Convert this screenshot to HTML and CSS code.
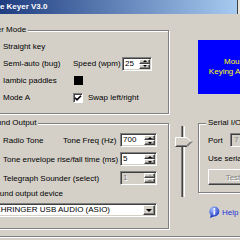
FILE: index.html
```html
<!DOCTYPE html>
<html>
<head>
<meta charset="utf-8">
<title>Mouse Keyer V3.0</title>
<link rel="stylesheet" href="styles.css">
</head>
<body>
<div class="window">
  <div class="titlebar">
    <span class="title">Mouse Keyer V3.0</span>
    <span class="capbtn"></span>
  </div>
  <div class="client">
    <div class="col-left">
      <div class="group g-mode">
        <span class="legend lg-mode">Keyer Mode</span>
        <div class="mrow">
          <div class="opt"><span class="radio"></span>Straight key</div>
        </div>
        <div class="mrow">
          <div class="opt"><span class="radio"></span>Semi-auto (bug)</div>
          <div class="lbl">Speed (wpm)</div>
          <div class="spin s25"><span class="v">25</span><span class="ud"><span class="b up"></span><span class="b dn"></span></span></div>
        </div>
        <div class="mrow">
          <div class="opt"><span class="radio on"></span>Iambic paddles</div>
          <div class="lbl"><span class="swatch"></span></div>
        </div>
        <div class="mrow">
          <div class="opt"><span class="radio"></span>Mode A</div>
          <div class="opt span2"><span class="check"><svg width="8" height="8" viewBox="0 0 8 8"><polyline points="1,3.8 3,5.8 7,1.8" fill="none" stroke="#000" stroke-width="1.6"/></svg></span>Swap left/right</div>
        </div>
      </div>

      <div class="group g-sound">
        <span class="legend lg-sound">Sound Output</span>
        <div class="srow">
          <div class="opt"><span class="radio on"></span>Radio Tone</div>
          <div class="lbl">Tone Freq (Hz)</div>
          <div class="spin s700"><span class="v">700</span><span class="ud"><span class="b up"></span><span class="b dn"></span></span></div>
        </div>
        <div class="srow">
          <div class="opt span2"><span class="radio"></span>Tone envelope rise/fall time (ms)</div>
          <div class="spin s700"><span class="v">5</span><span class="ud"><span class="b up"></span><span class="b dn"></span></span></div>
        </div>
        <div class="srow">
          <div class="opt span2"><span class="radio"></span>Telegraph Sounder (select)</div>
          <div class="spin s700 off"><span class="v">1</span><span class="ud"><span class="b up"></span><span class="b dn"></span></span></div>
        </div>
        <div class="devlabel">Sound output device</div>
        <div class="combo"><span class="v">BEHRINGER USB AUDIO (ASIO)</span><span class="drop"></span></div>
      </div>
    </div>

    <div class="col-mid">
      <div class="slider">
        <svg class="thumb" width="18" height="10" viewBox="0 0 18 10">
          <polygon points="0,0 12,0 17,5 12,10 0,10" fill="#d4d0c8"/>
          <polyline points="0.5,9.5 0.5,0.5 12,0.5 16.3,4.8" fill="none" stroke="#fff"/>
          <polyline points="0.5,9.5 12,9.5 17,4.5" fill="none" stroke="#404040"/>
          <polyline points="1.5,8.5 11.6,8.5 15.6,4.8" fill="none" stroke="#808080"/>
        </svg>
      </div>
    </div>

    <div class="col-right">
      <div class="display">
        <span>Mouse</span>
        <span>Keying Adapter</span>
      </div>
      <div class="group g-serial">
        <span class="legend lg-serial">Serial I/O</span>
        <div class="prow"><span class="plabel">Port</span><span class="tbox">7</span></div>
        <div class="useser">Use serial port</div>
        <div class="btn">Test</div>
      </div>
      <div class="help">
        <svg width="12" height="12" viewBox="0 0 12 12">
          <defs>
            <radialGradient id="hg" cx="0.35" cy="0.3" r="0.8">
              <stop offset="0" stop-color="#a8c0ff"/>
              <stop offset="1" stop-color="#1a36c4"/>
            </radialGradient>
          </defs>
          <path d="M3 8.5 L2 12 L6.5 10 Z" fill="#1a36c4"/>
          <circle cx="6.3" cy="5.5" r="5" fill="url(#hg)"/>
          <circle cx="6.3" cy="2.9" r="1" fill="#fff"/>
          <rect x="5.4" y="4.5" width="1.8" height="4.2" fill="#fff"/>
        </svg>
        <span>Help</span>
      </div>
    </div>
  </div>
  <div class="sep"></div>
</div>
</body>
</html>
```

FILE: styles.css
```css
* { box-sizing: border-box; }
html, body { margin: 0; padding: 0; }
body {
  width: 240px;
  height: 240px;
  overflow: hidden;
  background: #d4d0c8;
  font-family: "Liberation Sans", Arial, sans-serif;
  font-size: 8px;
  color: #000;
}
.window { width: 240px; }

/* title bar */
.titlebar {
  height: 14px;
  display: flex;
  background: linear-gradient(to right, #1e3c80 0, #a6caf0 236px);
}
.title {
  flex: 1;
  margin-left: -21px;
  font-weight: bold;
  color: #fff;
  line-height: 14px;
  white-space: nowrap;
}
.capbtn {
  width: 3px;
  flex: none;
  border-left: 1px solid #404040;
  background: #e6e4de;
}

/* client area */
.client {
  height: 222px;
  display: flex;
  align-items: flex-start;
}
.col-left { width: 198px; margin-left: -29px; flex: none; }
.col-mid { width: 29px; flex: none; }
.col-right { width: 80px; flex: none; }

/* group boxes */
.group {
  position: relative;
  border: 1px solid #808080;
  box-shadow: inset 1px 1px 0 #fff, 1px 1px 0 #fff;
}
.legend {
  position: absolute;
  top: -6px;
  padding: 0 2px;
  line-height: 10px;
  background: #d4d0c8;
  white-space: nowrap;
}
.lg-mode { left: 9px; }
.lg-sound { left: 13px; }
.lg-serial { left: 7px; }

.g-mode {
  margin-top: 16px;
  height: 84px;
  padding: 7px 11px 7px 14px;
}
.mrow {
  display: grid;
  grid-template-columns: 87px 49px 30px;
  height: 17px;
  align-items: center;
}
.g-sound {
  margin-top: 9px;
  height: 106px;
  padding: 9px 11px 11px 14px;
}
.srow {
  display: grid;
  grid-template-columns: 77px 57px 37px;
  height: 14px;
  align-items: center;
}
.srow + .srow { margin-top: 5px; }
.span2 { grid-column: span 2; }

.opt {
  display: flex;
  align-items: center;
  white-space: nowrap;
}
.lbl { display: flex; align-items: center; white-space: nowrap; }

.radio {
  width: 12px;
  height: 12px;
  margin-right: 5px;
  flex: none;
  border-radius: 50%;
  background: #fff;
  border: 1px solid #808080;
  box-shadow: inset 1px 1px 0 #404040;
  display: flex;
  align-items: center;
  justify-content: center;
}
.radio.on::after {
  content: "";
  width: 4px;
  height: 4px;
  border-radius: 50%;
  background: #000;
}

.check {
  width: 10px;
  height: 10px;
  margin-right: 5px;
  flex: none;
  background: #fff;
  border-top: 1px solid #808080;
  border-left: 1px solid #808080;
  border-right: 1px solid #fff;
  border-bottom: 1px solid #fff;
  box-shadow: inset 1px 1px 0 #404040;
  display: flex;
  align-items: center;
  justify-content: center;
}
.check svg { display: block; }

.swatch {
  width: 9px;
  height: 9px;
  margin-left: 1px;
  background: #000;
}

/* sunken fields */
.spin, .combo, .tbox {
  border-top: 1px solid #808080;
  border-left: 1px solid #808080;
  border-right: 1px solid #fff;
  border-bottom: 1px solid #fff;
  box-shadow: inset 1px 1px 0 #404040, inset -1px -1px 0 #d4d0c8;
  background: #fff;
}
.spin {
  height: 14px;
  display: flex;
  padding: 1px;
}
.s25 { width: 30px; }
.s700 { width: 37px; }
.spin .v {
  flex: 1;
  padding-left: 1px;
  line-height: 10px;
  white-space: nowrap;
}
.ud {
  width: 11px;
  flex: none;
  display: flex;
  flex-direction: column;
  background: #d4d0c8;
}
.b {
  flex: 1;
  border: 1px solid;
  border-color: #fff #404040 #404040 #fff;
  box-shadow: inset -1px -1px 0 #808080;
  display: flex;
  align-items: center;
  justify-content: center;
}
.up::after {
  content: "";
  border-left: 2px solid transparent;
  border-right: 2px solid transparent;
  border-bottom: 2px solid #000;
}
.dn::after {
  content: "";
  border-left: 2px solid transparent;
  border-right: 2px solid transparent;
  border-top: 2px solid #000;
}
.spin.off { background: #d4d0c8; }
.spin.off .v { color: #808080; text-shadow: 1px 1px 0 #fff; }
.spin.off .up::after { border-bottom-color: #808080; }
.spin.off .dn::after { border-top-color: #808080; }

.devlabel {
  margin-top: 3px;
  height: 12px;
  line-height: 12px;
  padding-left: 4px;
  white-space: nowrap;
}
.combo {
  margin-top: 3px;
  height: 14px;
  width: 171px;
  display: flex;
  padding: 1px;
}
.combo .v {
  flex: 1;
  padding-left: 2px;
  line-height: 10px;
  white-space: nowrap;
  overflow: hidden;
}
.drop {
  width: 12px;
  flex: none;
  background: #d4d0c8;
  border: 1px solid;
  border-color: #fff #404040 #404040 #fff;
  box-shadow: inset -1px -1px 0 #808080;
  display: flex;
  align-items: center;
  justify-content: center;
}
.drop::after {
  content: "";
  border-left: 3px solid transparent;
  border-right: 3px solid transparent;
  border-top: 3px solid #000;
}

/* slider */
.slider {
  position: relative;
  margin: 112px 0 0 12px;
  width: 4px;
  height: 71px;
  border-left: 1px solid #808080;
  border-right: 1px solid #fff;
  background: linear-gradient(to right, #404040 1px, #d4d0c8 1px);
}
.thumb {
  position: absolute;
  left: -7px;
  top: 11px;
  display: block;
}

/* right column */
.display {
  margin-top: 26px;
  height: 54px;
  width: 76px;
  background: #0000ff;
  color: #ffff00;
  display: flex;
  flex-direction: column;
  justify-content: center;
  align-items: center;
  line-height: 10px;
  white-space: nowrap;
}
.g-serial {
  margin-top: 29px;
  height: 70px;
  width: 60px;
  padding: 9px 0 0 9px;
}
.prow {
  display: flex;
  align-items: center;
  height: 14px;
}
.plabel { width: 22px; flex: none; }
.tbox {
  width: 24px;
  height: 14px;
  flex: none;
  background: #d4d0c8;
  color: #808080;
  padding-left: 3px;
  line-height: 12px;
}
.useser {
  margin-top: 6px;
  height: 12px;
  line-height: 12px;
  white-space: nowrap;
}
.btn {
  margin-top: 4px;
  height: 16px;
  width: 50px;
  border: 1px solid;
  border-color: #fff #404040 #404040 #fff;
  box-shadow: inset -1px -1px 0 #808080;
  display: flex;
  align-items: center;
  justify-content: center;
  color: #808080;
  text-shadow: 1px 1px 0 #fff;
}
.help {
  margin: 13px 0 0 10px;
  height: 12px;
  display: flex;
  align-items: center;
  gap: 2px;
  color: #1f35d8;
}
.help svg { display: block; flex: none; }

.sep {
  height: 2px;
  border-top: 1px solid #808080;
  border-bottom: 1px solid #fff;
}
```
